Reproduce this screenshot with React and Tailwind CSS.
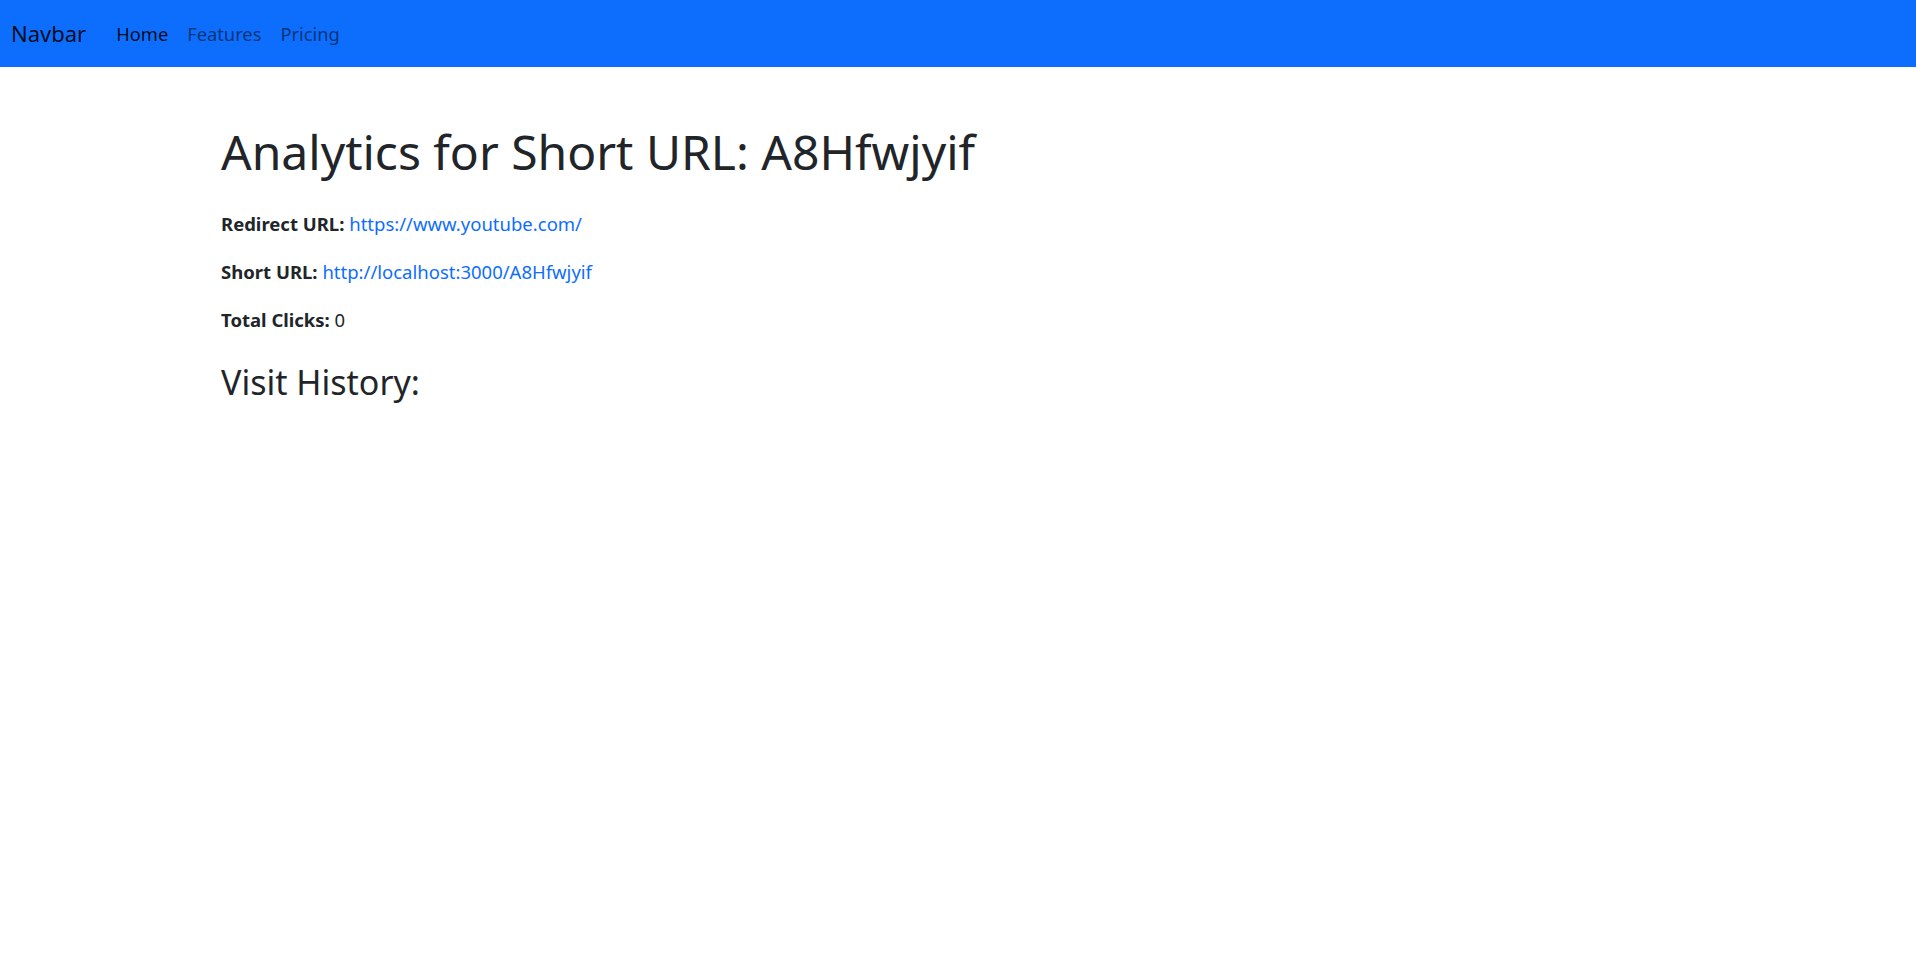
export default function App() {
  const font = { fontFamily: '"Noto Sans", "Open Sans", sans-serif' };
  return (
    <div className="min-h-screen bg-white text-[#212529]" style={font}>
      <nav className="h-[67px] bg-[#0d6efd] flex items-center px-[11px] pb-[2px]">
        <a href="#" className="text-[22px] text-black/90 mr-[30px] leading-none">Navbar</a>
        <ul className="flex items-center gap-[19px] text-[18.3px] leading-none pt-[3px]">
          <li><a href="#" className="text-black/90">Home</a></li>
          <li><a href="#" className="text-black/55">Features</a></li>
          <li><a href="#" className="text-black/55">Pricing</a></li>
        </ul>
      </nav>

      <main className="pl-[221px] pt-[54px]">
        <h1 className="text-[48px] leading-[62px] font-normal mb-[27px]">Analytics for Short URL: A8Hfwjyif</h1>
        <p className="text-[18.5px] leading-[28px] mb-[20px]">
          <strong className="font-bold">Redirect URL:</strong>{" "}
          <a href="#" className="text-[#0d6efd]">https://www.youtube.com/</a>
        </p>
        <p className="text-[18.5px] leading-[28px] mb-[20px]">
          <strong className="font-bold">Short URL:</strong>{" "}
          <a href="#" className="text-[#0d6efd]">http://localhost:3000/A8Hfwjyif</a>
        </p>
        <p className="text-[18.5px] leading-[28px] mb-[28px]">
          <strong className="font-bold">Total Clicks:</strong> 0
        </p>
        <h3 className="text-[34px] leading-[40px] font-normal">Visit History:</h3>
      </main>
    </div>
  );
}
